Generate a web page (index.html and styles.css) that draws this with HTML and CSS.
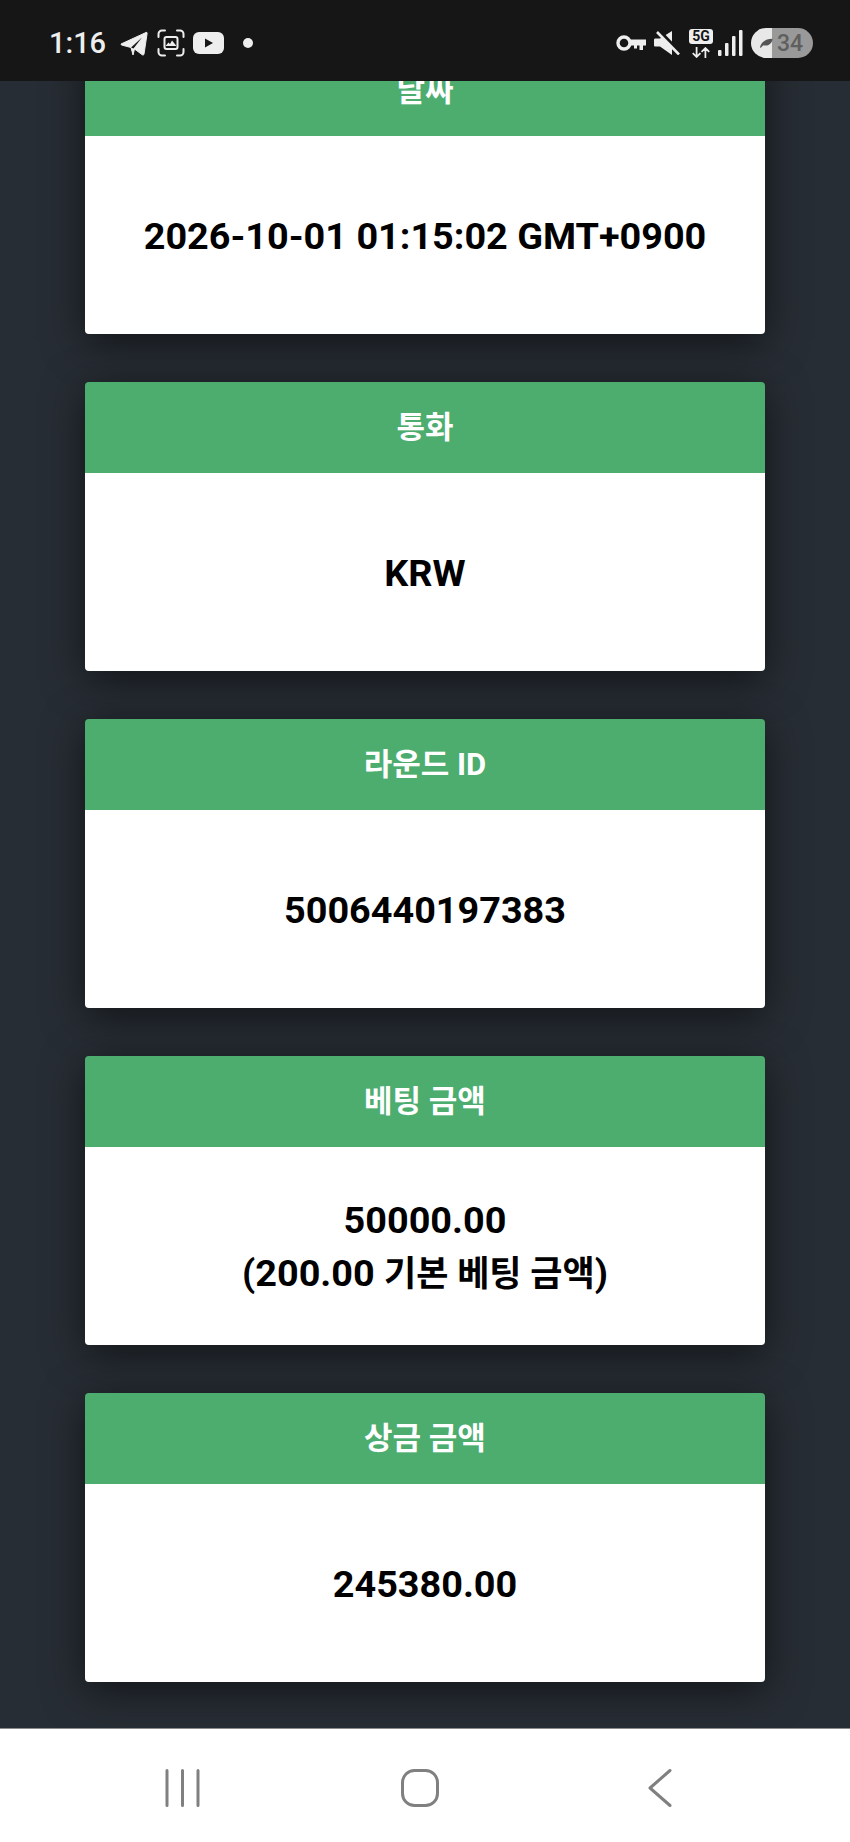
FILE: index.html
```html
<!DOCTYPE html>
<html lang="ko">
<head>
<meta charset="utf-8">
<title>베팅 내역</title>
<link rel="stylesheet" href="styles.css">
</head>
<body>
<header class="status">
 <span class="time">1:16</span>
 <svg class="ic-telegram" viewBox="0 0 28 25"><path d="M1 13 26 1.500c.9-.4 1.300.2 1.100 1L24 23c-.2 1-.9 1.300-1.700.8L14.500 18 13 24l-2-7.500-9.500-2.500z" fill="#eee" stroke="#eee" stroke-linejoin="round"/><path d="M11 16.500 22 6.500 13.500 17.500z" fill="#161616"/></svg>
 <svg class="ic-capture" viewBox="0 0 28 28"><path d="M1.500 8V5a3.500 3.500 0 0 1 3.500-3.500h3M20 1.500h3A3.500 3.500 0 0 1 26.500 5v3M26.500 20v3a3.500 3.500 0 0 1-3.500 3.500h-3M8 26.500H5A3.500 3.500 0 0 1 1.500 23v-3" fill="none" stroke="#eee" stroke-width="2" stroke-linecap="round"/><rect x="7.500" y="8" width="13" height="12" rx="2" fill="none" stroke="#eee" stroke-width="2"/><path d="M8.500 17l3-3.500 1.500 1.500 2-3.500 4.500 5.500z" fill="#eee"/></svg>
 <svg class="ic-youtube" viewBox="0 0 31 22"><rect width="31" height="22" rx="6" fill="#eee"/><path d="M12 6.500v9l8-4.500z" fill="#161616"/></svg>
 <span class="dot"></span>
 <div class="status-right">
  <svg class="ic-key" viewBox="0 0 30 18"><circle cx="8" cy="9" r="6" fill="none" stroke="#eee" stroke-width="3.400"/><path d="M13 5.500h17v6h-3v4.500h-3.500v-4.500h-2.500v3h-3v-3H13z" fill="#eee"/></svg>
  <svg class="ic-mute" viewBox="0 0 26 24"><path d="M0 9c0-1 .5-1.500 1.500-1.500H6L18 0v24L6 15.500H1.500C.5 15.500 0 15 0 14z" fill="#eee"/><path d="M5 0l22 23" stroke="#161616" stroke-width="4"/><path d="M3 1l22 22.500" stroke="#eee" stroke-width="2.600"/></svg>
  <div class="net">
   <span class="net-label">5G</span>
   <svg class="ic-arrows" viewBox="0 0 20 10"><path d="M6 0v9M2.500 5.500 6 9l3.500-3.500M14 10V1M10.500 4.500 14 1l3.500 3.500" fill="none" stroke="#eee" stroke-width="1.600"/></svg>
  </div>
  <svg class="ic-signal" viewBox="0 0 25 26"><rect x="0" y="20" width="3.500" height="6" rx="1" fill="#eee"/><rect x="7" y="13" width="3.500" height="13" rx="1" fill="#eee"/><rect x="14" y="6" width="3.500" height="20" rx="1" fill="#eee"/><rect x="21" y="0" width="3.500" height="26" rx="1" fill="#eee"/></svg>
  <div class="battery">
   <svg class="ic-leaf" viewBox="0 0 16 12"><path d="M1 11C3 4 8 1 15.500 1 15 7 10 10 5 8.500L2 11.500z" fill="#555"/></svg>
   <span class="battery-num">34</span>
  </div>
 </div>
</header>

<main class="list">
 <section class="card">
  <h2 class="card-title">날짜</h2>
  <div class="card-value">2026-10-01 01:15:02 GMT+0900</div>
 </section>
 <section class="card">
  <h2 class="card-title">통화</h2>
  <div class="card-value">KRW</div>
 </section>
 <section class="card">
  <h2 class="card-title">라운드 ID</h2>
  <div class="card-value">5006440197383</div>
 </section>
 <section class="card">
  <h2 class="card-title">베팅 금액</h2>
  <div class="card-value"><p class="value-lines">50000.00<br>(200.00 <span class="ko">기본 베팅 금액</span>)</p></div>
 </section>
 <section class="card">
  <h2 class="card-title">상금 금액</h2>
  <div class="card-value">245380.00</div>
 </section>
</main>

<nav class="navbar">
 <svg class="ic-recent" viewBox="0 0 35 38"><path d="M2 1.500v35M17.500 1.500v35M33 1.500v35" stroke="#808080" stroke-width="3" stroke-linecap="round"/></svg>
 <svg class="ic-home" viewBox="0 0 38 38"><rect x="1.500" y="1.500" width="35" height="35" rx="12" fill="none" stroke="#808080" stroke-width="3"/></svg>
 <svg class="ic-back" viewBox="0 0 24 38"><path d="M22 1.500 2 19l20 17.500" fill="none" stroke="#808080" stroke-width="3" stroke-linecap="round" stroke-linejoin="round"/></svg>
</nav>
</body>
</html>
```
FILE: styles.css
```css
html, body {
 height: 100%;
}
body {
 background: #272d34;
 display: flex;
 flex-direction: column;
 font-family: Roboto, 'Noto Sans CJK KR', sans-serif;
 height: 1842px;
 margin: 0;
 overflow: hidden;
}

/* status bar */
.status {
 align-items: center;
 background: #161616;
 box-sizing: border-box;
 color: #eee;
 display: flex;
 flex: 0 0 81px;
 height: 81px;
 padding: 5px 37px 0 49px;
}
.time {
 font-size: 29px;
 font-weight: 500;
 margin-right: 14px;
 width: 57px;
}
.status svg {
 display: block;
 flex: none;
}
.ic-telegram {
 height: 25px;
 margin-right: 9px;
 width: 28px;
}
.ic-capture {
 height: 28px;
 margin-right: 8px;
 width: 28px;
}
.ic-youtube {
 height: 22px;
 margin-right: 19px;
 width: 31px;
}
.dot {
 background: #eee;
 border-radius: 50%;
 height: 10px;
 width: 10px;
}
.status-right {
 align-items: center;
 display: flex;
 margin-left: auto;
}
.ic-key {
 height: 18px;
 margin-right: 8px;
 width: 30px;
}
.ic-mute {
 height: 24px;
 margin-right: 9px;
 width: 26px;
}
.net {
 display: flex;
 flex-direction: column;
 margin-right: 5px;
 width: 24px;
}
.net-label {
 background: #eee;
 border-radius: 3px;
 color: #161616;
 font-size: 14px;
 font-weight: 700;
 height: 15px;
 line-height: 15px;
 text-align: center;
}
.status svg.ic-arrows {
 height: 11px;
 margin-top: 3px;
 width: 24px;
}
.ic-signal {
 height: 26px;
 margin-right: 8px;
 width: 25px;
}
.battery {
 align-items: center;
 background: linear-gradient(90deg, #e8e8e8 0, #e8e8e8 34%, #999 34%, #999 100%);
 border-radius: 15px;
 box-sizing: border-box;
 display: flex;
 height: 30px;
 padding-left: 8px;
 width: 62px;
}
.ic-leaf {
 height: 12px;
 width: 14px;
}
.battery-num {
 color: #5f5f5f;
 font-size: 23px;
 font-weight: 500;
 margin-left: 4px;
}

/* cards */
.list {
 display: flex;
 flex: 1;
 flex-direction: column;
 gap: 48px;
 min-height: 0;
 overflow: hidden;
 padding: 0 85px;
}
.card {
 border-radius: 4px;
 box-shadow: 0 8px 40px rgba(0, 0, 0, .55);
 flex: none;
 height: 289px;
}
.card:first-child {
 margin-top: -36px;
}
.card-title {
 background: #4cad6f;
 border-radius: 4px 4px 0 0;
 color: #fff;
 font-size: 31px;
 font-weight: 700;
 height: 91px;
 line-height: 91px;
 margin: 0;
 text-align: center;
}
.card-value {
 align-items: center;
 background: #fff;
 border-radius: 0 0 4px 4px;
 box-sizing: border-box;
 color: #000;
 display: flex;
 font-size: 37.8px;
 font-weight: 700;
 height: 198px;
 justify-content: center;
 line-height: 53px;
 padding-top: 3px;
 text-align: center;
}
.value-lines {
 margin: 0;
}
.ko {
 font-size: 35px;
}

/* bottom nav */
.navbar {
 align-items: center;
 background: #fff;
 border-top: 1px solid #8a8a8a;
 box-sizing: border-box;
 display: flex;
 flex: 0 0 114px;
 padding: 5px 0 0 165px;
}
.ic-recent {
 height: 38px;
 margin-right: 201px;
 width: 35px;
}
.ic-home {
 height: 38px;
 margin-right: 209px;
 width: 38px;
}
.ic-back {
 height: 38px;
 width: 24px;
}
```
